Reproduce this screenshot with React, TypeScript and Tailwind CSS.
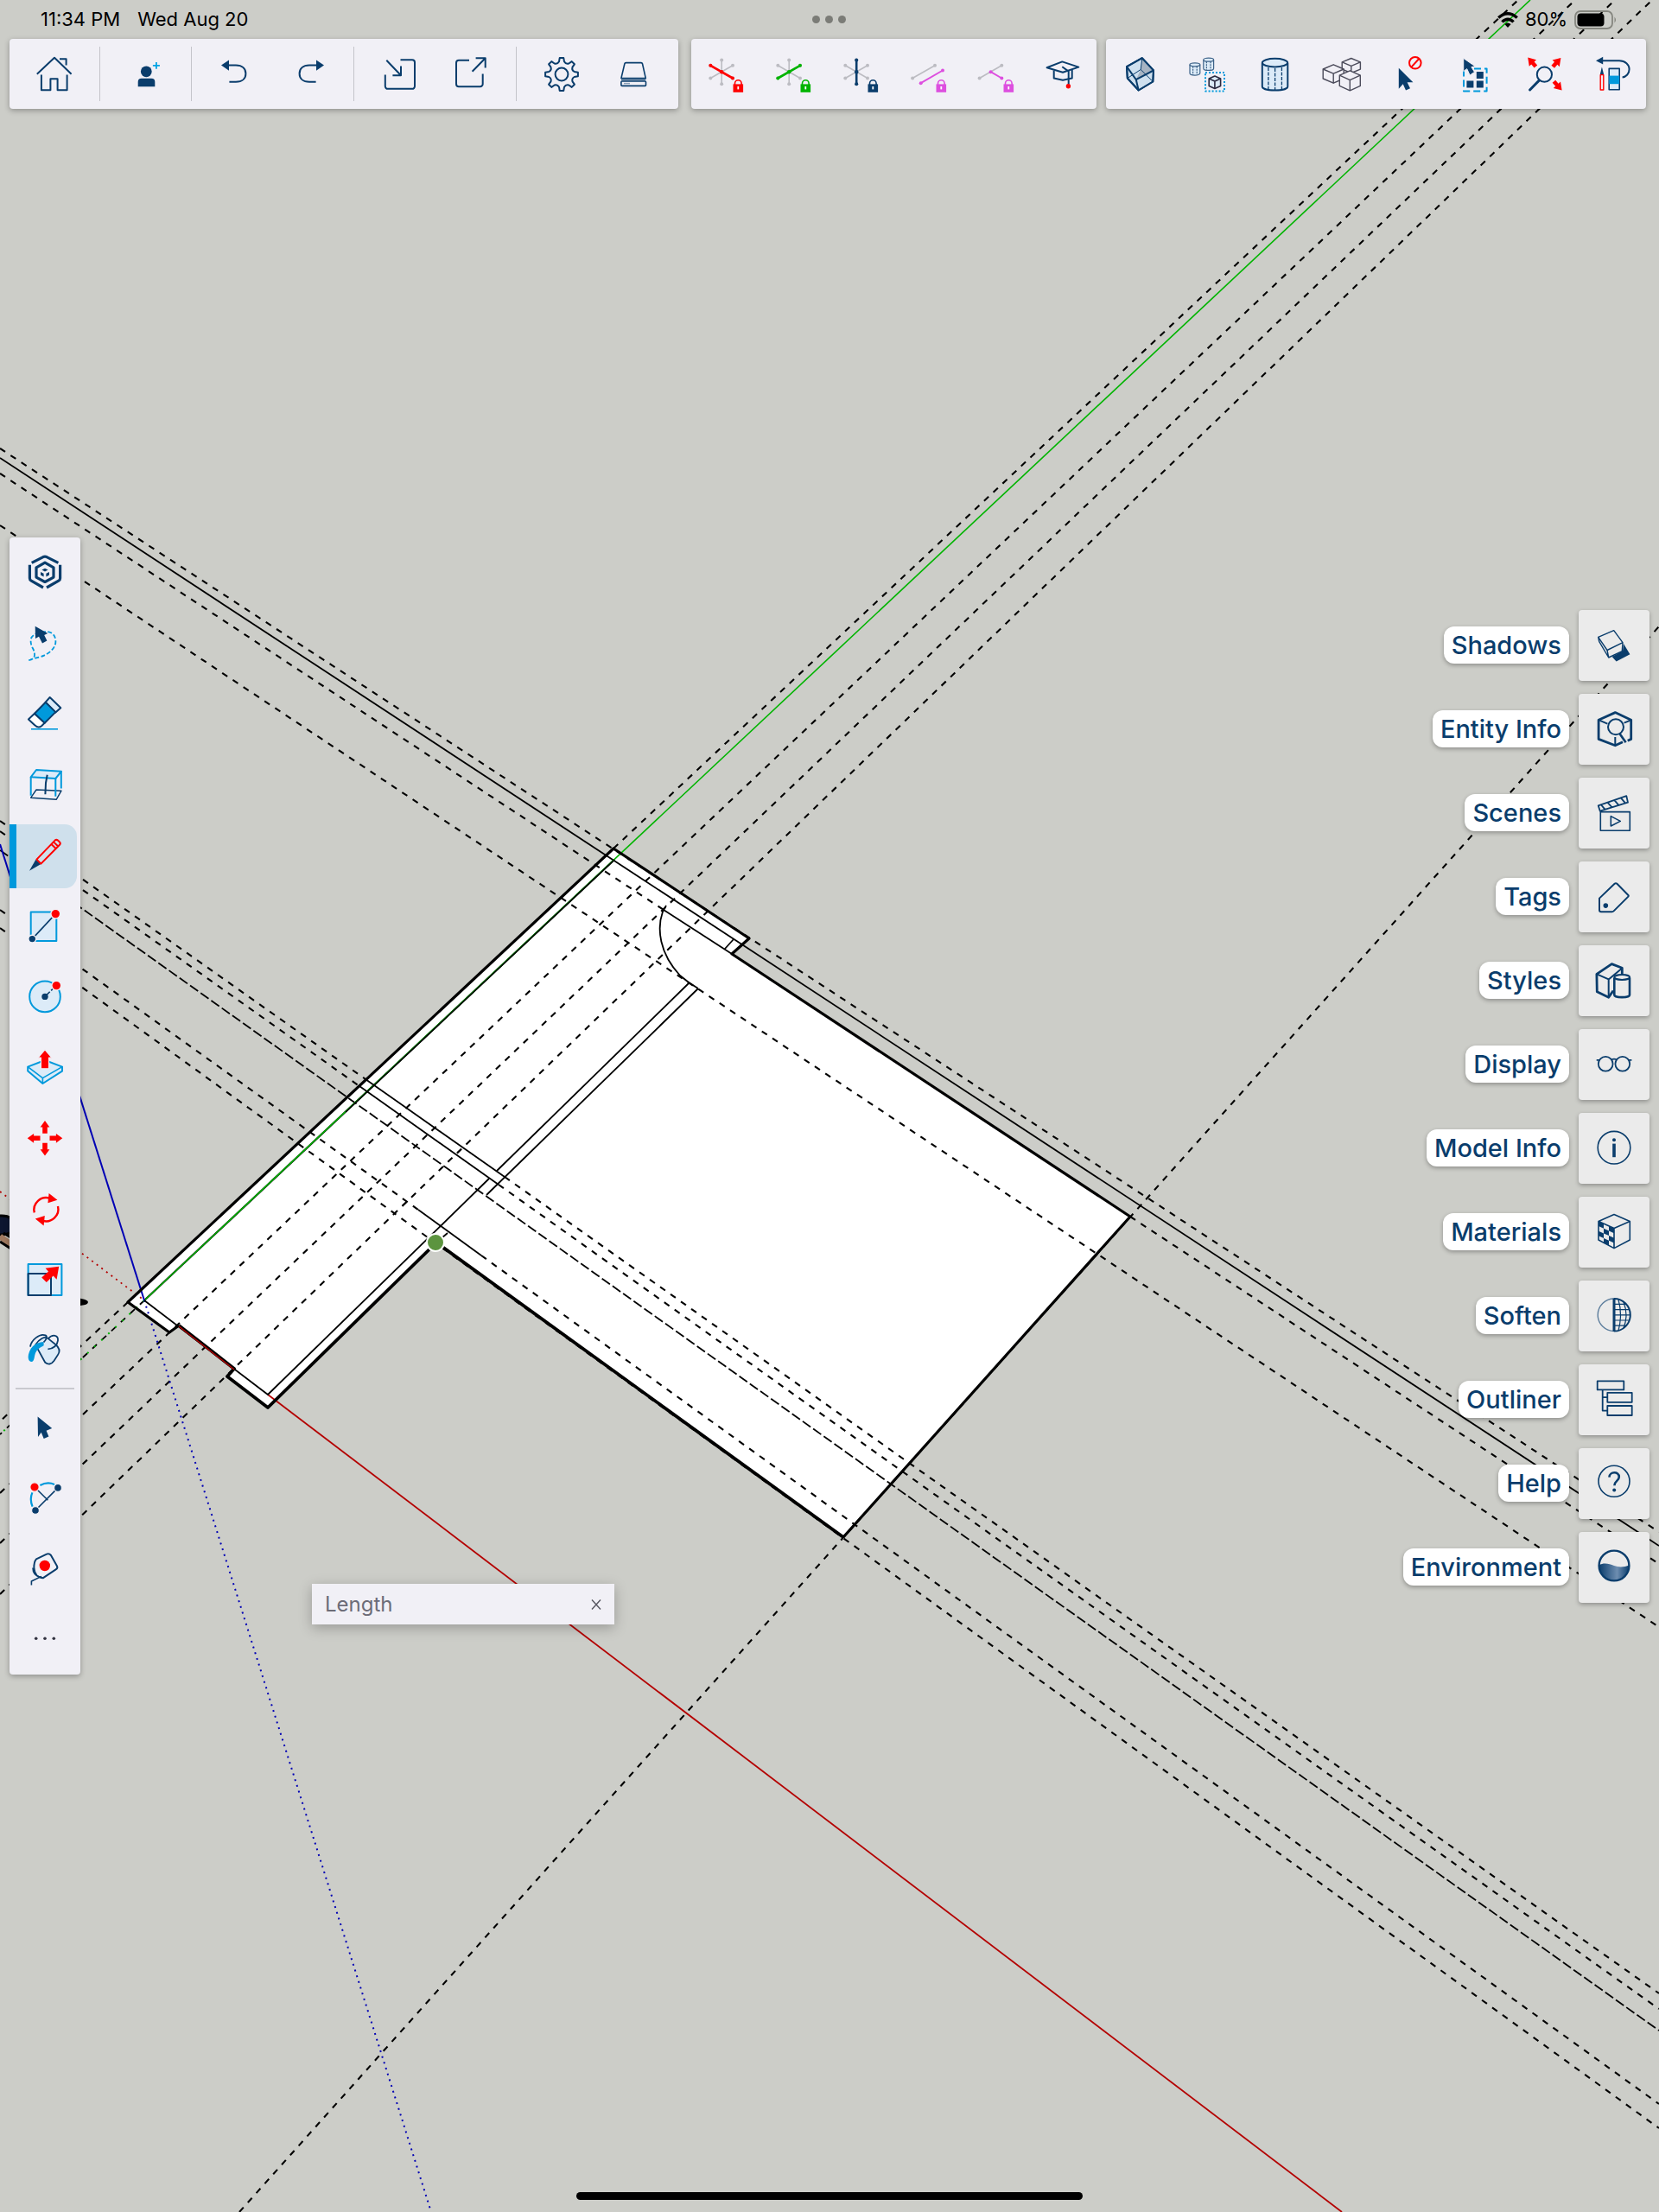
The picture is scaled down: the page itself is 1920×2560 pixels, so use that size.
import { type ReactNode } from "react";

const NAVY = "#0a3d6c";
const BLUE = "#0099dc";
const PALE = "#dcebf8";
const RED = "#ff0000";
const GREY = "#bcbcc2";
const PINK = "#dd4fdf";
const PANEL = "#f1f0f6";

function Icon({ children }: { children: ReactNode }) {
  return (
    <svg
      viewBox="0 0 48 48"
      className="size-12 shrink-0 overflow-visible"
      fill="none"
      stroke={NAVY}
      strokeWidth={2}
      strokeLinejoin="round"
      aria-hidden="true"
    >
      {children}
    </svg>
  );
}

// Isometric cube inscribed in a box
function Cube({ x, y, w, h, drop }: { x: number; y: number; w: number; h: number; drop: number }) {
  const mx = x + w / 2;
  return (
    <>
      <path
        d={`M${x} ${y + drop}L${mx} ${y}L${x + w} ${y + drop}V${y + h - drop}L${mx} ${y + h}L${x} ${y + h - drop}Z`}
      />
      <path d={`M${x} ${y + drop}L${mx} ${y + drop * 2}L${x + w} ${y + drop}M${mx} ${y + drop * 2}V${y + h}`} />
    </>
  );
}

function Lock({ color }: { color: string }) {
  return (
    <>
      <path d="M35.5 36V34.5a3.8 3.8 0 0 1 7.6 0V36" stroke={color} strokeWidth={1.6} />
      <path d="M33.5 35.4h11.6v9.4H33.5z" fill={color} stroke="none" />
      <path d="M39.3 38v3.4" stroke="#fff" strokeWidth={1.8} />
    </>
  );
}

const axisEnds = {
  red: [7.3, 13.8, 33, 28.5],
  green: [7.3, 28.5, 33, 13.8],
  blue: [20.2, 7.5, 20.2, 35.2],
};

function Axis({ x1, y1, x2, y2, color, w }: { x1: number; y1: number; x2: number; y2: number; color: string; w: number }) {
  return (
    <g stroke={color} strokeWidth={w} fill={color}>
      <path d={`M${x1} ${y1}L${x2} ${y2}`} />
      <circle cx={x1} cy={y1} r={2} stroke="none" />
      <circle cx={x2} cy={y2} r={2} stroke="none" />
    </g>
  );
}

function AxisLock({ active, color }: { active: "red" | "green" | "blue"; color: string }) {
  const [x1, y1, x2, y2] = axisEnds[active];
  return (
    <Icon>
      {Object.values(axisEnds).map(([a, b, c, d], i) => (
        <Axis key={i} x1={a} y1={b} x2={c} y2={d} color={GREY} w={1.6} />
      ))}
      <Axis x1={x1} y1={y1} x2={x2} y2={y2} color={color} w={2.6} />
      <circle cx={20.2} cy={21.2} r={2.2} fill={color} stroke="none" />
      <Lock color={color} />
    </Icon>
  );
}

function gearPath() {
  let d = "";
  for (let i = 0; i < 8; i++) {
    const base = (i * Math.PI) / 4 - Math.PI / 2;
    const pts: [number, number][] = [
      [-0.2, 15],
      [-0.12, 19],
      [0.12, 19],
      [0.2, 15],
    ];
    pts.forEach(([a, r], j) => {
      const x = (24 + r * Math.cos(base + a)).toFixed(1);
      const y = (24 + r * Math.sin(base + a)).toFixed(1);
      d += `${i === 0 && j === 0 ? "M" : "L"}${x} ${y}`;
    });
    const va = base + Math.PI / 4 - 0.2;
    const qa = base + Math.PI / 8;
    d += `Q${(24 + 12.5 * Math.cos(qa)).toFixed(1)} ${(24 + 12.5 * Math.sin(qa)).toFixed(1)} ${(24 + 15 * Math.cos(va)).toFixed(1)} ${(24 + 15 * Math.sin(va)).toFixed(1)}`;
  }
  return d + "Z";
}

const undoShape = (
  <>
    <path d="M9 13.6L18 7.4v12.4z" fill={NAVY} stroke="none" />
    <path d="M17 13.6h9c7.4 0 11.4 4 11.4 9.6s-4 9.6-11.4 9.6h-7.6" />
  </>
);

type Tool = { label: string; icon: ReactNode };

const fileGroups: { size: string; tools: Tool[] }[] = [
  {
    size: "basis-[105px]",
    tools: [
      {
        label: "Home",
        icon: (
          <Icon>
            <path d="M3.8 23.8L24 4.8l19.6 19M30 6.2h7.6v7.4M8.9 24.4v17.8h10.5v-13h8.2v13h11V24.4" />
          </Icon>
        ),
      },
    ],
  },
  {
    size: "basis-[106px]",
    tools: [
      {
        label: "Invite",
        icon: (
          <Icon>
            <circle cx={24.3} cy={20.8} r={6.4} fill={NAVY} stroke="none" />
            <path d="M14.7 38.2v-5.4a4 4 0 0 1 4-4h11.6a4 4 0 0 1 4 4v5.4z" fill={NAVY} stroke="none" />
            <path d="M35.9 9.9v7.8M31.9 13.8h8" stroke="#00a3e4" strokeWidth={1.8} />
          </Icon>
        ),
      },
    ],
  },
  {
    size: "basis-[188px] px-1",
    tools: [
      { label: "Undo", icon: <Icon>{undoShape}</Icon> },
      {
        label: "Redo",
        icon: (
          <Icon>
            <g transform="translate(48 0) scale(-1 1)">{undoShape}</g>
          </Icon>
        ),
      },
    ],
  },
  {
    size: "basis-[188px] px-[10px]",
    tools: [
      {
        label: "Import",
        icon: (
          <Icon>
            <path d="M25.5 7.2H39a3 3 0 0 1 3 3v27.6a3 3 0 0 1-3 3H10.8a3 3 0 0 1-3-3V24.5" />
            <path d="M9.3 7.8L26 25.2M16.4 25.2H26V14.5" />
          </Icon>
        ),
      },
      {
        label: "Export",
        icon: (
          <Icon>
            <path d="M22 7.8H10a3 3 0 0 0-3 3v24.4a3 3 0 0 0 3 3h24.7a3 3 0 0 0 3-3V23.5" />
            <path d="M25.6 20.8L40.7 5.2M29.6 5.2h11.1v11.3" />
          </Icon>
        ),
      },
    ],
  },
  {
    size: "basis-[187px] px-[10px]",
    tools: [
      {
        label: "Settings",
        icon: (
          <Icon>
            <path d={gearPath()} />
            <circle cx={24} cy={24} r={7.4} />
          </Icon>
        ),
      },
      {
        label: "Storage",
        icon: (
          <Icon>
            <g strokeWidth={1.6}>
              <path d="M16 10.6h17a1.6 1.6 0 0 1 1.5 1.2l3.8 16.8H9.9l4-16.8a1.6 1.6 0 0 1 1.5-1.2z" />
              <path d="M10 30.2h28.2" strokeWidth={1} />
              <rect x={9.9} y={32} width={28.6} height={5.4} rx={1} />
              <path d="M13 34.6h7" strokeWidth={1.4} stroke="#8aa0b8" />
            </g>
          </Icon>
        ),
      },
    ],
  },
];

const axisTools: Tool[] = [
  { label: "Lock red axis", icon: <AxisLock active="red" color={RED} /> },
  { label: "Lock green axis", icon: <AxisLock active="green" color="#00b400" /> },
  { label: "Lock blue axis", icon: <AxisLock active="blue" color={NAVY} /> },
  {
    label: "Lock parallel",
    icon: (
      <Icon>
        <Axis x1={6.1} y1={28.5} x2={32} y2={13.8} color={GREY} w={1.6} />
        <Axis x1={15.7} y1={34.2} x2={41} y2={19.5} color={PINK} w={2} />
        <Lock color={PINK} />
      </Icon>
    ),
  },
  {
    label: "Lock perpendicular",
    icon: (
      <Icon>
        <Axis x1={5.6} y1={28.5} x2={31.3} y2={13.8} color={GREY} w={1.6} />
        <Axis x1={18.6} y1={21.2} x2={31.3} y2={28.5} color={PINK} w={2} />
        <Lock color={PINK} />
      </Icon>
    ),
  },
  {
    label: "Learn",
    icon: (
      <Icon>
        <path d="M5.6 16.2L23.3 9.4l19 6.2L24 21.8z" />
        <path d="M13.7 19.5v9L24 30.8l10.7-2.3v-10" />
        <path d="M23.3 15.2l7.4 5.4V36" />
        <circle cx={30.4} cy={37.8} r={2.7} fill={RED} stroke="none" />
      </Icon>
    ),
  },
];

const viewTools: Tool[] = [
  {
    label: "X-ray",
    icon: (
      <Icon>
        <path d="M9 15.2L26.8 5.2 40 19.5l-.7 13-16.6 10L9.8 28.5z" fill="#cfe0ef" />
        <path d="M26.8 5.2L40 19.5 19.8 30.2 25.2 18.5z" fill="#a7b4c3" stroke="none" />
        <path d="M9 15.2L19.8 30.2 40 19.5M19.8 30.2l2.9 12.3" />
        <path d="M26.8 5.2l-1.6 13.3M25.2 18.5L9.8 28.5M25.2 18.5l14.1 14" strokeWidth={1} />
        <path d="M9 15.2L26.8 5.2 40 19.5l-.7 13-16.6 10L9.8 28.5z" />
      </Icon>
    ),
  },
  {
    label: "Make component",
    icon: (
      <Icon>
        {[
          [4, 10.8],
          [19.8, 5.2],
        ].map(([x, y]) => (
          <g key={x} strokeWidth={1.2} stroke="#3c6288">
            <path d={`M${x} ${y + 2}v10c0 3 11.8 3 11.8 0v-10`} fill={PALE} />
            <ellipse cx={x + 5.9} cy={y + 2} rx={5.9} ry={2} fill={PALE} />
            <path d={`M${x + 3.6} ${y + 4}v9.6M${x + 8.2} ${y + 4}v9.6`} strokeDasharray="2 1" />
          </g>
        ))}
        <rect x={22} y={22} width={22} height={21.6} stroke={BLUE} strokeDasharray="2 2" />
        <g stroke="#2a2a40" strokeWidth={1.6} fill={PALE}>
          <Cube x={26.2} y={26} w={13.4} h={14.4} drop={3} />
        </g>
      </Icon>
    ),
  },
  {
    label: "Hidden geometry",
    icon: (
      <Icon>
        <path d="M9.8 11v27c0 6 29.5 6 29.5 0V11" fill={PALE} />
        <ellipse cx={24.5} cy={10.6} rx={14.7} ry={4.8} fill={PALE} />
        <path d="M16.9 16v25M24.6 17v25M32.4 16v25" strokeWidth={1.3} strokeDasharray="4 1.5" />
      </Icon>
    ),
  },
  {
    label: "Components",
    icon: (
      <Icon>
        <g stroke="#4b4b5a" strokeWidth={1.4} fill={PANEL}>
          <Cube x={24.2} y={5.5} w={21.2} h={17} drop={4.4} />
          <Cube x={2.2} y={12.8} w={24} h={21.4} drop={5.2} />
          <Cube x={21.3} y={19.8} w={24} h={23} drop={5.4} />
        </g>
      </Icon>
    ),
  },
  {
    label: "Deselect",
    icon: (
      <Icon>
        <path d="M10.8 16.8v24l4.9-5.6 3.3 7.4 5-2.3-3.4-7.1h6.8z" fill={NAVY} stroke="none" />
        <circle cx={29.8} cy={10.8} r={6.8} stroke={RED} />
        <path d="M25.4 15.6l8.8-9.6" stroke={RED} />
      </Icon>
    ),
  },
  {
    label: "Select all",
    icon: (
      <Icon>
        <rect x={8} y={17.4} width={26.6} height={26} stroke={BLUE} strokeDasharray="8 4" />
        <path d="M7.7 5.4v15.2l4-3 3.4 7.4 5.4-3.6-3.6-5.8 4.4-.8z" fill={NAVY} stroke={PANEL} strokeWidth={1} />
        <path d="M22.8 21h8v8h-8zM11.4 31.6h8v8h-8zM22.8 31.6h8v8h-8z" fill={NAVY} stroke="none" />
      </Icon>
    ),
  },
  {
    label: "Zoom extents",
    icon: (
      <Icon>
        <circle cx={23.4} cy={24.2} r={8.6} />
        <path d="M17 31.4L6.6 42" strokeWidth={3} strokeLinecap="round" />
        <g fill={RED} stroke="none">
          <path d="M4.2 4.6l9.8 2.6-2.4 2.2 3.6 4-3.6 3-3.4-4-2.4 2.4z" />
          <path d="M42.4 5l-9.8 2.6 2.4 2.2-3.6 4 3.6 3 3.4-4 2.4 2.4z" />
          <path d="M43.6 42.6l-9.8-2.6 2.4-2.2-3.6-4 3.6-3 3.4 4 2.4-2.4z" />
        </g>
      </Icon>
    ),
  },
  {
    label: "Erase and draw",
    icon: (
      <Icon>
        <path d="M5 8.2l8.2-4.4v8.8z" fill={NAVY} stroke="none" />
        <path d="M12 8.2h20c7 0 11.6 4.6 11.6 9.8s-3.6 9-8 9.4" />
        <rect x={20.2} y={17.4} width={12} height={24.4} fill={PALE} strokeWidth={1.6} />
        <path d="M20.2 25.6h12v9.6h-12z" fill={BLUE} stroke="none" />
        <path d="M11.9 15.6l2.2 8.4H9.8z" fill={NAVY} stroke="none" />
        <path d="M10.2 24.6h3.6v17.4h-3.6z" stroke={RED} strokeWidth={1.4} />
      </Icon>
    ),
  },
];

const drawTools: Tool[] = [
  {
    label: "Model",
    icon: (
      <Icon>
        <g strokeWidth={3.2}>
          <path d="M8.7 12.4L22 5.6q2-.8 4 0l13.4 6.8M6.4 14.8v15.4q0 2 1.8 3L22 41M41.6 14.8v15.4q0 2-1.8 3L26 41" />
          <path d="M24 12.2l10 5.7v11.2l-10 5.4-10-5.4V17.9z" />
        </g>
        <path d="M24 18.8l3.6 1.8-3.6 1.8-3.6-1.8zM19 23l3.6 1.8v3.6L19 26.4zM29 23l-3.6 1.8v3.6l3.6-2z" fill={NAVY} stroke="none" />
      </Icon>
    ),
  },
  {
    label: "Lasso",
    icon: (
      <Icon>
        <path
          d="M5.3 43c6-.6 7.4-3.6 6.4-9.4C10.8 29.4 6.6 26 7.8 18.4 9.6 12 19.6 10 27 10c6 .6 9.4 5.4 9.4 11.4 0 8-7.4 13.4-13.4 16.2-3.6 1.6-9.4 3-15.6 4.6"
          stroke={BLUE}
          strokeWidth={1.8}
          strokeDasharray="5 2.4"
        />
        <path d="M12.7 3.7L13 18l4-2.3 4 7.7 5.4-2.9-3.2-6.6 4-2z" fill={NAVY} stroke="none" />
      </Icon>
    ),
  },
  {
    label: "Eraser",
    icon: (
      <Icon>
        <path d="M24.7 9.6l5-5.6 12.6 12.2-6 5.4z" fill={PALE} />
        <path d="M12 22.7L4.9 29.4l7.6 7q3.8 4 7.8.6l3.4-3.4z" fill="#fff" />
        <path d="M12 22.7L24.7 9.7l11.6 11.4-12.6 12.6z" fill={BLUE} />
        <path d="M8 40.8h31" stroke={BLUE} strokeWidth={1.6} />
      </Icon>
    ),
  },
  {
    label: "Section plane",
    icon: (
      <Icon>
        <path d="M7.7 38.2L14 29l29 1.2-5.7 10z" strokeWidth={1.4} />
        <path d="M7.7 14.3L14 6l29 1.7-6.7 8.3z" fill={PALE} stroke={BLUE} />
        <path d="M7.7 14.3v21.4M36.3 16v20.7M42.8 7.7v19.8" stroke={BLUE} />
        <path d="M26.7 11.7L25 21l-.6 13.3" />
      </Icon>
    ),
  },
  {
    label: "Line",
    icon: (
      <Icon>
        <path d="M6 40.8l7.4-13 5.6 5.4z" fill={NAVY} stroke="none" />
        <path d="M14.4 27.6L35.6 5.6q1.6-1.4 3.4 0l2 1.8q1.6 1.6 0 3.4L19.4 32.6zM31.4 10l5 4.8M34 7.4l5 4.8" stroke={RED} />
      </Icon>
    ),
  },
  {
    label: "Rectangle",
    icon: (
      <Icon>
        <rect x={7.7} y={6.4} width={29.6} height={33.6} fill={PALE} stroke={BLUE} />
        <path d="M9.3 37.6L36.3 8.6" strokeWidth={1.6} />
        <circle cx={9.3} cy={37.6} r={4.4} fill={NAVY} stroke={PANEL} strokeWidth={1.4} />
        <circle cx={36.3} cy={8.6} r={5.4} fill={RED} stroke={PANEL} strokeWidth={1.4} />
      </Icon>
    ),
  },
  {
    label: "Circle",
    icon: (
      <Icon>
        <circle cx={24} cy={22.4} r={17.8} fill={PALE} stroke={BLUE} />
        <path d="M24 22.4L37 9.6" strokeWidth={1.6} strokeDasharray="8 2" />
        <circle cx={24} cy={22.4} r={3.7} fill={NAVY} stroke="none" />
        <circle cx={37.3} cy={9.6} r={5.4} fill={RED} stroke={PANEL} strokeWidth={1.4} />
      </Icon>
    ),
  },
  {
    label: "Push/Pull",
    icon: (
      <Icon>
        <path d="M4.2 21.6L24 14l20 7.6v5L21.4 41 4.2 26.6z" fill={PALE} stroke={BLUE} />
        <path d="M4.2 21.6L21.4 34.6 44 21.6M21.4 34.6V41" stroke={BLUE} strokeWidth={1.6} />
        <path d="M24 1.8l8 9.4h-3.4v12.6h-9.2V11.2H16z" fill={RED} stroke={PANEL} strokeWidth={1.2} />
      </Icon>
    ),
  },
  {
    label: "Move",
    icon: (
      <Icon>
        <g fill={RED} stroke="none">
          {[0, 90, 180, 270].map((a) => (
            <path key={a} transform={`rotate(${a} 24 22.3)`} d="M24 2l5.4 7.4h-2.6v7.4h-5.6V9.4h-2.6z" />
          ))}
        </g>
      </Icon>
    ),
  },
  {
    label: "Rotate",
    icon: (
      <Icon>
        <path d="M11.8 26.4a14 14 0 0 1 18-16.6M39 19a14 14 0 0 1-18 16.6" stroke={RED} strokeWidth={2.4} />
        <path d="M28.6 4l9.8 7.8-11 3.4zM22.6 41.4L12.8 33.6l11-3.6z" fill={RED} stroke="none" />
      </Icon>
    ),
  },
  {
    label: "Scale",
    icon: (
      <Icon>
        <rect x={4.6} y={4} width={38.8} height={36} fill={PALE} stroke={BLUE} />
        <rect x={4.6} y={15} width={26.4} height={25} />
        <path d="M40.2 6.8l-2.6 15-4-4.2-7.8 7.4-5.6-5.6 7.8-7-3.4-3.6z" fill={RED} stroke="none" />
      </Icon>
    ),
  },
  {
    label: "Paint",
    icon: (
      <Icon>
        <path d="M13 15.4C17 9 24 4.4 28 8.4l8.6 6.8c4 3.4 5.4 6.8 2.6 11.4l-4.6 7.2c-3 4.4-7 4.8-10.4 2z" fill={PALE} strokeWidth={1.8} />
        <path d="M22.6 12c-6 0-15 3.4-17.6 14.6-1 5 .4 8.4 3.4 8.4 3.4 0 3-5 4.4-9.4 1.6-5 5.4-7 9.8-9.4z" fill={BLUE} stroke="none" />
        <path d="M7 17.6C8 10 18 1.6 24.6 4.4c2.6 1.4 1 5-2 8M27.6 8.4C33 2.6 39.6 4 39 10.4c-.6 5.4-5 9.6-11.6 10" strokeWidth={1.8} />
      </Icon>
    ),
  },
];

const extraTools: Tool[] = [
  {
    label: "Select",
    icon: (
      <Icon>
        <path d="M15.6 14.4L16 38l3.7-5.2 3 7.2 5.7-2.6-2.8-6.6 6.6-2.8z" fill={NAVY} stroke="none" />
      </Icon>
    ),
  },
  {
    label: "Arc",
    icon: (
      <Icon>
        <path d="M18.4 12Q27 7.4 35 11M9.4 20.4Q6 28 9.6 36.6" stroke={BLUE} strokeWidth={2.2} />
        <path d="M12 14l15.4 15.2M39 14.9L13 41" strokeWidth={1.6} />
        <circle cx={12} cy={14} r={5.2} fill={RED} stroke={PANEL} strokeWidth={1.2} />
        <circle cx={39} cy={14.9} r={4.4} fill={NAVY} stroke={PANEL} strokeWidth={1.2} />
        <circle cx={13} cy={41} r={4.4} fill={NAVY} stroke={PANEL} strokeWidth={1.2} />
      </Icon>
    ),
  },
  {
    label: "Tape measure",
    icon: (
      <Icon>
        <path d="M14 15.4l12-5.8q3-1 5 1.4l7 12.4q1.2 2.6-1.4 4L22 37.2c-6 0-10-4.4-10.6-11-.2-4.4.6-8.6 2.6-10.8z" />
        <path d="M10 25.6c0 5.4 3 9.4 8.6 10.8M20 35.4L8.4 41v4.4" strokeWidth={1.6} />
        <circle cx={23.8} cy={23} r={6.2} fill={RED} stroke="none" />
      </Icon>
    ),
  },
  {
    label: "More tools",
    icon: (
      <Icon>
        <g fill="#333340" stroke="none">
          <circle cx={13.7} cy={25.2} r={1.8} />
          <circle cx={24} cy={25.2} r={1.8} />
          <circle cx={34.3} cy={25.2} r={1.8} />
        </g>
      </Icon>
    ),
  },
];

const panels: Tool[] = [
  {
    label: "Shadows",
    icon: (
      <Icon>
        <path d="M35 22l7.4 12.3-15.8 8.2-5-5.4L34 30.6z" fill={NAVY} stroke="none" />
        <path d="M5.7 14.4l18-7.8L34 20.7l-18 8.8zM5.7 14.4l1 5 11 18.6 15.6-7.4.7-9.9M16 29.5l1.7 8.5" strokeWidth={1.4} />
      </Icon>
    ),
  },
  {
    label: "Entity Info",
    icon: (
      <Icon>
        <path d="M34 38.8l-8.7 4-19.2-7.4V13.2l19.2-8.6 18.4 8.6v22.2l-4 1.8" strokeWidth={2.8} />
        <path d="M7 13.6l9.4 4M43 13.6l-7.4 3M25.3 42v-9" />
        <circle cx={26} cy={21.3} r={9} />
        <path d="M30.6 29.2l7 10" strokeWidth={2.6} />
      </Icon>
    ),
  },
  {
    label: "Scenes",
    icon: (
      <Icon>
        <path d="M8.3 22.6h34v21.6h-34zM20.3 27.6l11 5.8-11 5.6z" strokeWidth={1.6} />
        <path d="M5.7 15.3L38.3 4.2 40 11.6 7.7 21.6zM9 14.4l4.6 5.4M16.6 11.8l5 5.6M24.4 9.2l5 5.6M32 6.6l4.8 5.6" strokeWidth={1.8} />
      </Icon>
    ),
  },
  {
    label: "Tags",
    icon: (
      <Icon>
        <path d="M7 25.6L24.6 8.8q1.4-1.2 2.8 0L40.4 22q.8.8 0 1.6L23.6 40.4q-.8.8-2 .8H9q-2 0-2-2z" />
        <circle cx={14.3} cy={34.1} r={2.8} fill={NAVY} stroke="none" />
      </Icon>
    ),
  },
  {
    label: "Styles",
    icon: (
      <Icon>
        <path d="M23 35.6l-5.3 7.7-13.4-6.5-.4-20.4L21.3 4.6l12 4.6v7" strokeWidth={2.8} />
        <path d="M4 16.4l13.7 6 15.6-13M17.7 22.4v20" />
        <path d="M24.3 20.4v20c0 3.6 17.7 3.6 17.7 0v-20" strokeWidth={2.6} />
        <ellipse cx={33.2} cy={20} rx={8.9} ry={2.9} />
      </Icon>
    ),
  },
  {
    label: "Display",
    icon: (
      <Icon>
        <circle cx={14.2} cy={23.3} r={8.4} strokeWidth={1.8} />
        <circle cx={33.8} cy={23.3} r={8.4} strokeWidth={1.8} />
        <path d="M3.7 18.8h3.6M40.6 18.8h3.8M20.6 18.6q3.4-2 6.8 0" strokeWidth={1.8} />
      </Icon>
    ),
  },
  {
    label: "Model Info",
    icon: (
      <Icon>
        <circle cx={24} cy={23.2} r={18.8} strokeWidth={1.6} />
        <circle cx={24} cy={14.2} r={2} fill={NAVY} stroke="none" />
        <path d="M24 18.6v15.6" strokeWidth={3.6} />
      </Icon>
    ),
  },
  {
    label: "Materials",
    icon: (
      <Icon>
        <g transform="matrix(6 2.7 0 5.6 6 11.5)" fill={NAVY} stroke="none">
          {[
            [0, 0],
            [2, 0],
            [1, 1],
            [0, 2],
            [2, 2],
            [1, 3],
          ].map(([c, r]) => (
            <path key={`${c}-${r}`} d={`M${c} ${r}h1v1h-1z`} />
          ))}
        </g>
        <path d="M6 11.5l18-8 18.3 8V33L24 42.6 6 33zM6 11.5l18 8.1 18.3-8.1M24 19.6v23" strokeWidth={1.6} />
      </Icon>
    ),
  },
  {
    label: "Soften",
    icon: (
      <Icon>
        <path d="M24 4a18.8 18.8 0 0 0 0 37.6" strokeWidth={1.4} stroke="#5c7d9c" />
        <path d="M24 4a18.8 18.8 0 0 1 0 37.6" />
        <path d="M24 3.6v38.4" strokeWidth={3} />
        <path d="M24 10.4h14M24 16.6h18M24 22.8h19M24 29h18M24 35.2h14M29 5q5 17.8 0 36M35 8q6 14.8 0 30" strokeWidth={1.2} />
      </Icon>
    ),
  },
  {
    label: "Outliner",
    icon: (
      <Icon>
        <g strokeWidth={1.8}>
          <rect x={4.7} y={2.4} width={30.6} height={10} />
          <rect x={16.3} y={15.8} width={28.4} height={11} />
          <rect x={16.3} y={31} width={28.4} height={11} />
          <path d="M10.7 12.4v24.2h5.6M10.7 21.2h5.6" />
        </g>
      </Icon>
    ),
  },
  {
    label: "Help",
    icon: (
      <Icon>
        <circle cx={24} cy={21.3} r={18} strokeWidth={1.6} />
        <path d="M18.4 16.6c.4-7 11.4-7 11.4-.4 0 4.8-5.4 4.6-5.4 10" strokeWidth={2.6} />
        <circle cx={24.2} cy={31.4} r={2} fill={NAVY} stroke="none" />
      </Icon>
    ),
  },
  {
    label: "Environment",
    icon: (
      <Icon>
        <defs>
          <linearGradient id="sea" x1="0" y1="0" x2="1" y2="0">
            <stop offset="0" stopColor={NAVY} />
            <stop offset="0.6" stopColor="#6d8db0" />
            <stop offset="1" stopColor={NAVY} />
          </linearGradient>
        </defs>
        <path d="M6.4 21.6c6-3.6 12-1.6 17.6.4 6 2.2 12 1.6 17.6-.6a17.6 17.6 0 1 1-35.2 0z" fill="url(#sea)" stroke="none" />
        <circle cx={24} cy={22} r={17.4} strokeWidth={2.4} />
      </Icon>
    ),
  },
];

const guides = [
  "M0 519L1920 1773",
  "M0 548L768 1053M1308 1408L1920 1810",
  "M0 608L1920 1883",
  "M0 950L423 1249M584 1362L1920 2307",
  "M0 962L416 1257M577 1371L1920 2325",
  "M0 1053L484 1400M557 1453L1920 2435",
  "M0 1074L1920 2463",
  "M148 1507L0 1645M710 982L1757 0",
  "M0 1728L1823 0",
  "M0 1786L1869 0",
  "M0 1845L1912 0",
  "M277 2560L1920 725",
];

function Scene() {
  return (
    <svg
      viewBox="0 0 1920 2560"
      preserveAspectRatio="xMidYMid slice"
      className="absolute inset-0 h-full w-full"
      fill="none"
      stroke="#000"
      strokeWidth={1.8}
      role="img"
      aria-label="Floor plan model"
    >
      <path
        d="M148 1507L710 982L867 1086L847 1104L1308 1408L976 1779L505 1438L310 1629L263 1593L271 1584L207 1534L196 1542Z"
        fill="#fff"
        stroke="none"
      />
      <g strokeDasharray="7.2 7.5" strokeWidth={2.1}>
        {guides.map((d) => (
          <path key={d} d={d} />
        ))}
      </g>
      <path d="M0 984L1920 2350" strokeDasharray="11.3 3.7" />
      <path d="M0 530L1920 1789" />

      {/* axes */}
      <path d="M167 1505L0 1660" strokeDasharray="7 8" />
      <path d="M167 1505L0 1660" stroke="#00b400" strokeDasharray="2 9" strokeWidth={2} />
      <path d="M167 1505L711 995" strokeWidth={2.2} />
      <path d="M167 1505L1771 0" stroke="#00b400" strokeWidth={1.6} />
      <path d="M400 1287L711 995" strokeWidth={1.4} />
      <path d="M310 1614L1553 2560" stroke="#b40000" />
      <path d="M0 1379L167 1505" stroke="#b40000" strokeDasharray="2 5" strokeWidth={1.8} />
      <path d="M0 977L167 1505" stroke="#0000b4" strokeWidth={2} />
      <path d="M167 1505L499 2560" stroke="#0000b4" strokeDasharray="2 5" strokeWidth={2} />

      {/* walls and door swing */}
      <path d="M423 1249L584 1362M416 1257L577 1371M484 1400L557 1453" />
      <path d="M566 1364L310 1614L167 1505M575 1355L797 1138M563 1383L808 1144" />
      <path d="M768 1053L847 1104M839 1098L849 1087M771 1048L767 1055C760 1075 763 1103 787 1129Q796 1137 808 1144" />
      <path d="M505 1438L518 1427" />

      {/* silhouette edges */}
      <g strokeLinejoin="round" strokeWidth={3.2}>
        <path d="M207 1534L196 1542L148 1507L710 982L867 1086L847 1104L1308 1408L976 1779" />
        <path d="M976 1779L505 1438L310 1629L263 1593L271 1584L207 1534" strokeWidth={3.8} />
      </g>
      <path d="M207 1535L271 1585" stroke="#b40000" strokeWidth={1.4} />

      <ellipse cx={2} cy={1418} rx={16} ry={11} fill="#0d1630" strokeWidth={3} />
      <path d="M0 1431L14 1441" stroke="#a07a60" strokeWidth={7} />
      <path d="M0 1437L14 1446M4 1427L14 1433" strokeWidth={3} />
      <ellipse cx={88} cy={1507} rx={13} ry={3.5} fill="#000" />

      <circle cx={504} cy={1438} r={10} fill="#5c943f" stroke="#fff" strokeWidth={2} />
    </svg>
  );
}

function ToolButton({ tool, className }: { tool: Tool; className: string }) {
  return (
    <button type="button" aria-label={tool.label} className={`flex items-center justify-center ${className}`}>
      {tool.icon}
    </button>
  );
}

const bar = "rounded-[4px] bg-[#f1f0f6] shadow-[0_2px_6px_rgba(0,0,0,0.3)]";

export default function App() {
  return (
    <div className="relative min-h-screen overflow-hidden bg-[#cccdc8] font-['Inter',sans-serif]">
      <Scene />

      <header className="relative z-10">
        <div className="grid h-[45px] grid-cols-3 items-center pr-12 pl-[47px] text-[22px] text-black">
          <div className="flex gap-5 whitespace-nowrap">
            <span>11:34 PM</span>
            <span>Wed Aug 20</span>
          </div>
          <div className="flex justify-center gap-[6px]">
            <span className="size-[9px] rounded-full bg-[#7b7c77]" />
            <span className="size-[9px] rounded-full bg-[#7b7c77]" />
            <span className="size-[9px] rounded-full bg-[#7b7c77]" />
          </div>
          <div className="flex items-center justify-end gap-2">
            <svg viewBox="0 0 24 18" className="h-[18px] w-6" fill="none" stroke="#000" strokeWidth={3.4} aria-hidden="true">
              <path d="M1.2 6.6Q12-3 22.8 6.600M5.400 11.4Q12 5 18.600 11.4" />
              <path d="M12 18l-3.600-4q3.600-3 7.200 0z" fill="#000" stroke="none" />
            </svg>
            <span>80%</span>
            <svg viewBox="0 0 50 22" className="h-[22px] w-[50px]" aria-hidden="true">
              <rect x={1} y={1} width={43} height={20} rx={6} fill="none" stroke="#85867f" strokeWidth={1.8} />
              <rect x={3.5} y={3.5} width={31} height={15} rx={4} />
              <path d="M46.5 7.5q3 3.5 0 7z" fill="#85867f" />
            </svg>
          </div>
        </div>

        <div className="flex gap-[15px] pr-[15px] pl-[11px]">
          <nav aria-label="File" className={`flex h-[81px] min-w-0 flex-[774] items-center divide-x divide-[#c4c4ca] ${bar}`}>
            {fileGroups.map((group, i) => (
              <div key={i} className={`flex h-[63px] grow ${group.size}`}>
                {group.tools.map((tool) => (
                  <ToolButton key={tool.label} tool={tool} className="h-full flex-1" />
                ))}
              </div>
            ))}
          </nav>
          <nav aria-label="Axis locks" className={`flex h-[81px] min-w-0 flex-[469] ${bar}`}>
            {axisTools.map((tool) => (
              <ToolButton key={tool.label} tool={tool} className="h-full flex-1" />
            ))}
          </nav>
          <nav aria-label="View" className={`-ml-1 flex h-[81px] min-w-0 flex-[625] ${bar}`}>
            {viewTools.map((tool) => (
              <ToolButton key={tool.label} tool={tool} className="h-full flex-1" />
            ))}
          </nav>
        </div>
      </header>

      {/* side panels float over the canvas, centred vertically */}
      <div className="absolute inset-0 flex items-center justify-between px-[11px]">
        <nav aria-label="Drawing tools" className={`flex w-[82px] flex-col pb-[2px] ${bar}`}>
          {drawTools.map((tool) => (
            <div key={tool.label} className="flex h-[82px] items-center">
              <ToolButton
                tool={tool}
                className={
                  tool.label === "Line"
                    ? "h-[74px] w-[78px] rounded-r-[14px] border-l-8 border-[#0099dc] bg-[#cfe0ec] pr-1"
                    : "h-full w-full"
                }
              />
            </div>
          ))}
          <hr className="mx-[7px] border-t-2 border-[#c9c9cf]" />
          {extraTools.map((tool) => (
            <ToolButton key={tool.label} tool={tool} className="h-[82px] w-full" />
          ))}
        </nav>

        <nav aria-label="Panels" className="flex flex-col items-end gap-[15px]">
          {panels.map((panel) => (
            <button key={panel.label} type="button" className="flex items-center gap-[11px]">
              <span className="rounded-xl bg-white px-[9px] text-[29px] leading-[43px] font-medium text-[#0a3d6c] shadow-[0_2px_5px_rgba(0,0,0,0.3)]">
                {panel.label}
              </span>
              <span className="flex size-[82px] items-center justify-center rounded-[4px] bg-[#ebebeb] shadow-[0_2px_5px_rgba(0,0,0,0.3)]">
                {panel.icon}
              </span>
            </button>
          ))}
        </nav>
      </div>

      <div className="absolute top-[1833px] left-[361px] flex h-[47px] w-[350px] items-center bg-[#f1f0f6] pr-3 pl-[15px] shadow-[0_4px_14px_rgba(0,0,0,0.25)]">
        <input
          type="text"
          aria-label="Length"
          placeholder="Length"
          className="min-w-0 flex-1 bg-transparent text-[24px] text-[#6c6c78] outline-none placeholder:text-[#6c6c78]"
        />
        <button type="button" aria-label="Close" className="flex size-[18px] items-center justify-center">
          <svg viewBox="0 0 12 12" className="size-3" stroke="#55555f" strokeWidth={1.4} aria-hidden="true">
            <path d="M1 0.5L11 11.5M11 0.5L1 11.5" />
          </svg>
        </button>
      </div>

      <div className="absolute bottom-[14px] left-1/2 h-[9px] w-[586px] -translate-x-1/2 rounded-full bg-black" />
    </div>
  );
}
